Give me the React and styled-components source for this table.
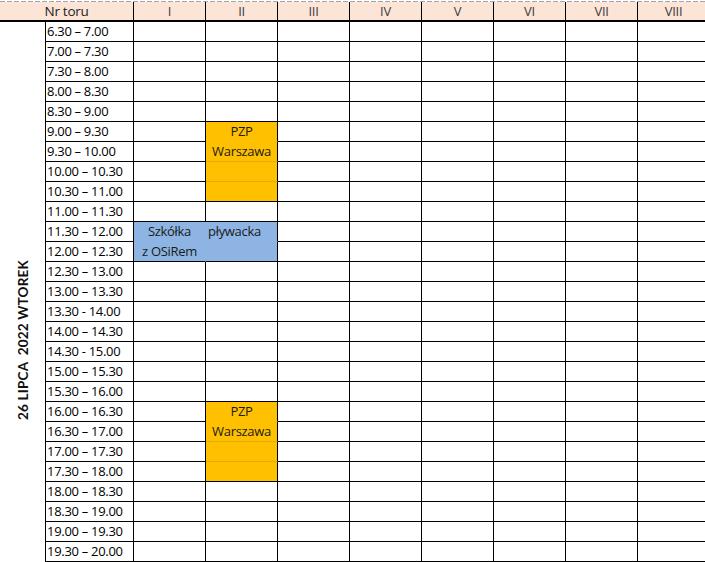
import React from 'react';
import styled, { createGlobalStyle } from 'styled-components';

const GlobalStyle = createGlobalStyle`
  html, body {
    margin: 0;
    padding: 0;
    background: #fff;
    overflow: hidden;
  }
  body {
    font-family: "Open Sans", Lato, "Liberation Sans", sans-serif;
  }
`;

const LANES = ['I', 'II', 'III', 'IV', 'V', 'VI', 'VII', 'VIII'];

const TIMES = [
  '6.30 – 7.00', '7.00 – 7.30', '7.30 – 8.00', '8.00 – 8.30', '8.30 – 9.00',
  '9.00 – 9.30', '9.30 – 10.00', '10.00 – 10.30', '10.30 – 11.00', '11.00 – 11.30',
  '11.30 – 12.00', '12.00 – 12.30', '12.30 – 13.00', '13.00 – 13.30', '13.30 - 14.00',
  '14.00 – 14.30', '14.30 - 15.00', '15.00 – 15.30', '15.30 – 16.00', '16.00 – 16.30',
  '16.30 – 17.00', '17.00 – 17.30', '17.30 – 18.00', '18.00 – 18.30', '18.30 – 19.00',
  '19.00 – 19.30', '19.30 – 20.00',
];

const ORANGE = '#ffc000';
const ORANGE_LINE = '#e3ab00';
const BLUE = '#8db4e2';

// booked cells, keyed by "row-lane"
const pzpBlock = (start) => ({
  [`${start}-1`]: { fill: ORANGE, text: 'PZP', bottom: ORANGE },
  [`${start + 1}-1`]: { fill: ORANGE, text: 'Warszawa', bottom: ORANGE_LINE },
  [`${start + 2}-1`]: { fill: ORANGE, bottom: ORANGE_LINE },
  [`${start + 3}-1`]: { fill: ORANGE },
});

const BOOKINGS = {
  ...pzpBlock(5),
  ...pzpBlock(19),
  '10-0': { fill: BLUE, text: 'Szkółka', right: BLUE, bottom: BLUE },
  '10-1': { fill: BLUE, text: 'pływacka', align: 'left', bottom: BLUE },
  '11-0': { fill: BLUE, text: 'z OSiRem', right: BLUE },
  '11-1': { fill: BLUE },
};

const TopRule = styled.div`
  height: 2px;
  width: 710px;
  background:
    repeating-linear-gradient(to right, #a5a5a5 0 5px, transparent 5px 7px) 0 1px / 100% 1px no-repeat,
    #fff;
`;

const Sheet = styled.div`
  display: grid;
  grid-template-columns: 45px 89px repeat(8, 72px);
  grid-template-rows: repeat(28, 20px);
  width: 710px;
  font-size: 13px;
  letter-spacing: -0.3px;
  color: #000;
`;

const HeadCell = styled.div`
  grid-column: ${(p) => (p.$wide ? 'span 2' : 'auto')};
  box-sizing: border-box;
  background: #fce4d6;
  border-right: 1px solid #000;
  border-bottom: 2px solid #000;
  line-height: 18px;
  text-align: center;
  font-size: ${(p) => (p.$wide ? '13.5px' : '13px')};
  font-weight: ${(p) => (p.$wide ? 400 : 500)};
  color: ${(p) => (p.$wide ? '#222' : '#3c3c3c')};
`;

const DateCell = styled.div`
  grid-column: 1;
  grid-row: 2 / span 27;
  display: flex;
  align-items: center;
  justify-content: center;
  padding-top: 96px;
  box-sizing: border-box;
`;

const DateLabel = styled.span`
  writing-mode: vertical-rl;
  transform: rotate(180deg);
  font-family: Lato, "Open Sans", sans-serif;
  font-weight: 700;
  font-size: 13.5px;
  letter-spacing: 0.2px;
  white-space: nowrap;
  color: #111;
`;

const TimeCell = styled.div`
  box-sizing: border-box;
  border-left: 1px solid #000;
  border-right: 1px solid #000;
  border-bottom: 1px solid #000;
  padding-left: 1px;
  line-height: 19px;
  white-space: nowrap;
`;

const LaneCell = styled.div`
  box-sizing: border-box;
  background: ${(p) => p.$fill || '#fff'};
  border-right: 1px solid ${(p) => p.$right || '#000'};
  border-bottom: 1px solid ${(p) => p.$bottom || '#000'};
  padding-left: ${(p) => (p.$align === 'left' ? '2px' : '0')};
  text-align: ${(p) => p.$align || 'center'};
  line-height: 19px;
  white-space: nowrap;
  overflow: hidden;
  color: #1a1a1a;
`;

export default function App() {
  return (
    <>
      <GlobalStyle />
      <TopRule />
      <Sheet>
        <HeadCell $wide>Nr toru</HeadCell>
        {LANES.map((lane) => (
          <HeadCell key={lane}>{lane}</HeadCell>
        ))}

        <DateCell>
          <DateLabel>26 LIPCA&nbsp; 2022 WTOREK</DateLabel>
        </DateCell>

        {TIMES.map((time, row) => (
          <React.Fragment key={time}>
            <TimeCell style={{ gridColumn: 2 }}>{time}</TimeCell>
            {LANES.map((lane, i) => {
              const b = BOOKINGS[`${row}-${i}`] || {};
              return (
                <LaneCell
                  key={lane}
                  $fill={b.fill}
                  $right={b.right}
                  $bottom={b.bottom}
                  $align={b.align}
                >
                  {b.text}
                </LaneCell>
              );
            })}
          </React.Fragment>
        ))}
      </Sheet>
    </>
  );
}
